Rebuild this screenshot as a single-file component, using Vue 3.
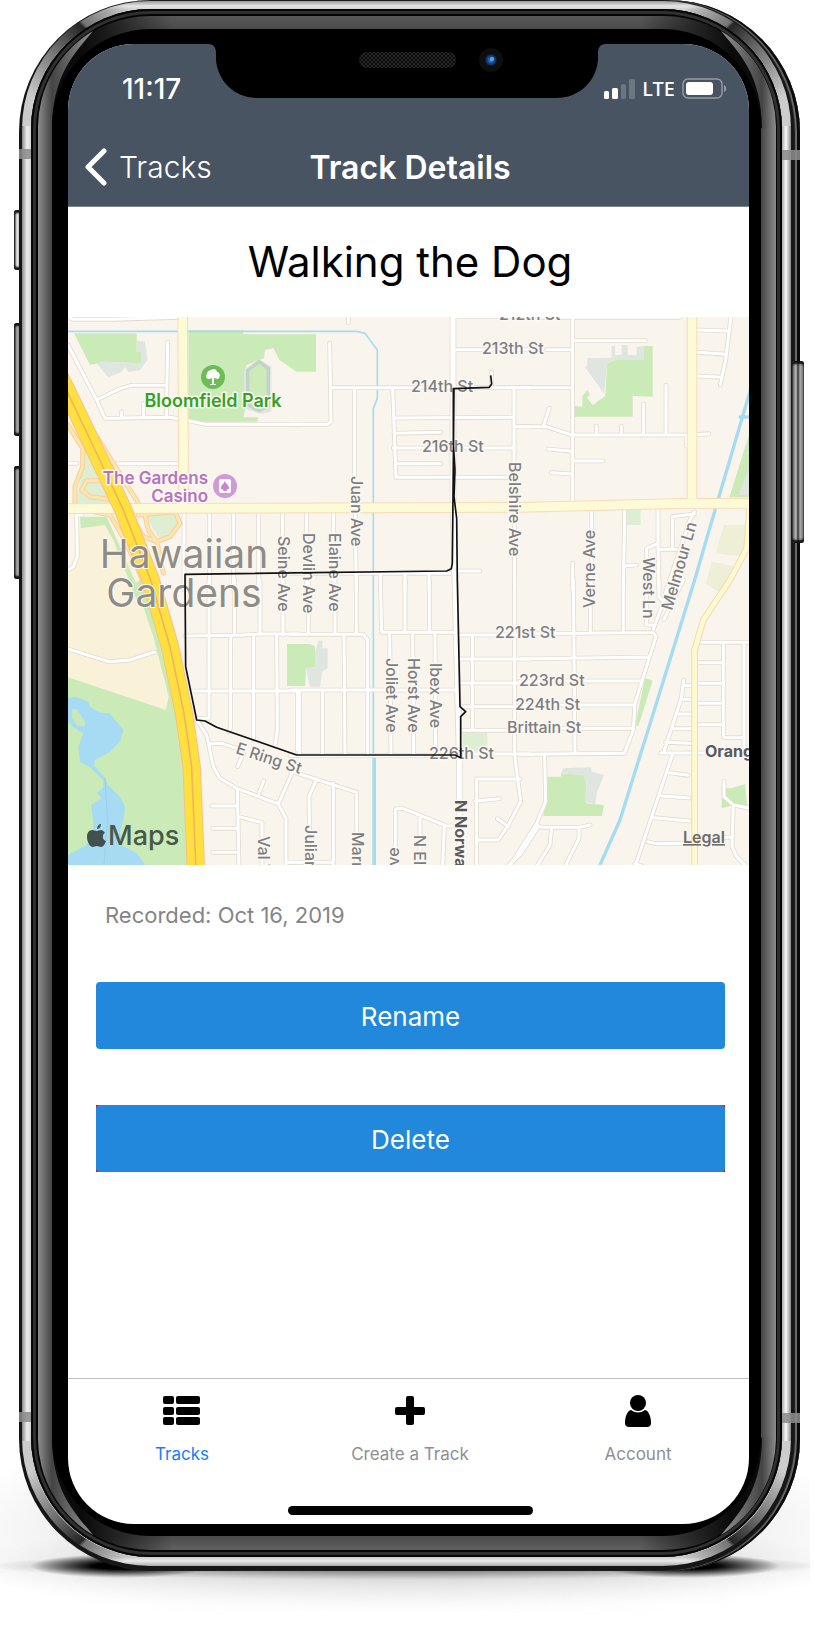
<script setup>
const corners = ['tl', 'tr', 'bl', 'br']

const tabs = [
  { id: 'tracks', label: 'Tracks', active: true },
  { id: 'create', label: 'Create a Track', active: false },
  { id: 'account', label: 'Account', active: false },
]

// The map is divided into six tiles; every path is local to its tile.
const tiles = [
  {
    at: 'translate(-24 -21)',
    roads: 'M24 22L40 28H160L355 22M24 105L110 270L135 325L330 322L385 332L435 343H720M110 270L180 236L215 226H318M323 96L319 320M185 305V325M251 280V322M24 460H50M172 461H360M372 610V840M449 610V840M521 610V840M596 610V840M667 610V840M66 615H50L52 740L40 770L24 780',
    green: 'M385 60H550V73H768V185H710L690 172L658 150L640 115L615 120L612 145L597 150L560 165L552 195L555 300L550 322H595L592 335H385ZM42 70H230V125H245V160L130 155L90 165ZM60 620H140L175 700L250 870H230L160 690L135 645L62 655Z',
    pale: 'M75 420L115 480L140 540L180 580H50L68 470ZM255 615L350 605L355 650L300 690Z',
    grey: 'M230 92L255 95L262 150L240 180L205 186L195 170L185 186L145 202L110 160L130 155L245 160V125H230ZM597 148L634 170V305L600 312L552 295V180Z',
    olive: '',
  },
  {
    at: 'translate(666 -21)',
    roads: 'M175 20V38M0 343H112L123 335L119 100M127 233H720M194 233V500L199 840M308 235L318 502H660M312 324L670 322M312 370L452 367M310 414H670M316 461H452M500 20H720M500 119H720M672 233V460L674 840M672 350H720M50 610V840M131 610V840M500 783H570M271 790V840M345 790V840M417 790V840M0 790H480M604 185V232',
    green: '', pale: '', grey: '', olive: '',
  },
  {
    at: 'translate(1356 -21)',
    roads: 'M0 22H480M158 22V575M158 92H376M80 119H158M0 233H158M0 350H80L155 375H500M70 348L88 295M84 417L158 424M94 488L158 492M158 453H249M229 348V375M304 348V375M371 282V375M438 225V375M499 375V408M532 374L567 371M530 60L625 63M532 127L620 133M532 198L606 202M633 20L617 150L601 225M158 760V840M215 600V840M314 600L310 840M414 597V700L417 840M414 700L380 715V840M523 612L457 620V718H470M417 718H457M523 605L510 630L436 850M312 768L350 765',
    green: 'M165 288L187 290V258L203 240L210 255L200 262L218 285L256 258L262 160L285 150H370V108H398V260L338 258V320H165ZM690 365L628 562H690Z',
    pale: 'M320 600H362V645H320Z',
    grey: 'M194 170L202 168V145L275 143V108H285V135H305V105H323V135H350V110L370 108V150H285L262 160L252 250ZM690 470L655 555H690Z',
    olive: 'M612 645H676V740L587 730ZM575 755L640 768L600 850L558 820Z',
  },
  {
    at: 'translate(-24 789)',
    roads: 'M24 207L145 245L205 241L285 216M375 168L540 166L600 162H720M395 333H720M447 0V415M524 0V165M512 170V440L508 455M600 0V160M581 168V480M669 0V165M650 168L652 450L645 500M712 333V510M410 420L440 465L460 560L480 595L530 625L655 672L678 715V860M410 415H440M450 492L485 490L530 505M533 560L550 520M597 640L611 603M655 672L700 570M532 625L537 860M455 678H530M458 745H530M458 817H535M537 710L606 728V860M678 847H720',
    green: 'M24 292L318 390L326 350L280 170L230 20H215L240 0L340 200L372 480L388 860H24Z',
    pale: '', grey: '', olive: '',
  },
  {
    at: 'translate(666 789)',
    roads: 'M55 0V160M135 0V160M199 0V155M0 163H220L233 180V520M162 168L165 520M0 330H500M28 333V520M98 333V520M271 0L275 157H490M345 0V157M418 0V157M299 160L303 520M368 160L371 520M435 160L437 520M0 527H500M512 165H720M512 237H720M515 309H720M520 380H720M547 165V450M520 451H720M510 522H720M674 0V525L692 665L655 735L625 780H560M560 860V597H690M555 663L628 656M622 716L655 740M745 740L690 825L650 860M0 573L200 637V860M80 597L57 650L60 860M130 610V860M0 847H130M316 860V687L338 685L470 738H500M390 712V860M463 740L458 860',
    green: 'M-9 192H60L75 200V262L48 265L45 318H-9Z',
    pale: 'M518 457H592V512H520Z',
    grey: 'M85 182H97V205H113V265L97 275L90 320H60L48 265L75 262V220Z',
    olive: '',
  },
  {
    at: 'translate(1356 789)',
    roads: 'M160 0L165 520M211 0V158M310 0V158M0 162L310 158H400L408 170L345 370L340 450L313 520L0 523M0 237L385 231M0 303H365M0 375H345M0 445H335M417 0V50L425 60M380 0V135H400M455 0L400 148M490 0L432 118M74 525L77 665L50 730L-32 860M50 735L65 742H180L210 735M95 742L90 795L50 860M177 742V775L135 860M545 187H690M610 187V470L620 473H672M672 187V505M535 248H610M535 310H610M535 370H610M535 434H610M520 317H490M487 358H520M472 402H520M455 446H520M437 487L515 490M491 300L484 355L432 515M422 519H560M457 525L345 860M447 578L505 586M425 648L508 654M402 713L508 723M383 785L405 791L520 789M345 850L370 860M612 603V650L640 675L690 685M640 675L636 800L650 830L680 860M615 772H636',
    green: 'M375 295L398 302L355 438H345ZM82 590H122L124 580L190 585L200 610L197 640L200 670L252 675L246 708H70L80 640ZM605 625H635L675 612L682 680L640 675L605 685Z',
    pale: '',
    grey: 'M130 565L213 562L215 575L252 585L230 640L226 672L195 665L200 610L190 585L124 580Z',
    olive: 'M560 0H620L600 30L560 15Z',
  },
]

const river = 'M0 43H866L891 49L928 99V244L916 274V1644'
const riverWide = 'M919 1319V1644M2050 210L1944 569L1880 789L1756 1189L1656 1509L1596 1644M2016 300H2046'
const ramps = 'M0 324L44 394V449L21 509V569M146 549L66 539L41 519L56 491H101M61 319L211 559M211 594L321 584L336 619L306 659L266 674L226 659L191 599M231 594L241 639L266 674L286 769M76 584L126 594L176 679L236 819'
const avenues = 'M344 0L347 560M-10 575L1356 571L1856 559H2060M1872 0V559'
const parkway = 'M2046 560L2036 695L1986 789L1906 909L1880 999V1660'
const freeway = 'M-30 170L0 229L81 399L164 574L248 789L306 989L348 1189L371 1349L384 1660'
const norwalk = 'M1155 0V539L1161 789L1174 1329V1650'
const walk = 'M1268 175L1271 201L1264 211L1156 215V379L1161 459L1158 539L1166 604L1168 789L1176 1169L1193 1184L1178 1199V1322L1161 1314H686L446 1231L411 1212L386 1209L353 1049L351 772L1136 762L1150 755L1153 739L1155 540L1158 215'

const labels = [
  { t: '212th St', x: 431, y: 3, r: 0 },
  { t: '213th St', x: 414, y: 37, r: 0 },
  { t: '214th St', x: 343, y: 75, r: 0 },
  { t: '216th St', x: 354, y: 135, r: 0 },
  { t: '221st St', x: 427, y: 321, r: 0 },
  { t: '223rd St', x: 451, y: 369, r: 0 },
  { t: '224th St', x: 447, y: 393, r: 0 },
  { t: 'Brittain St', x: 439, y: 416, r: 0 },
  { t: '226th St', x: 361, y: 442, r: 0 },
  { t: 'Seine Ave', x: 210, y: 219, r: 90 },
  { t: 'Devlin Ave', x: 235, y: 216, r: 90 },
  { t: 'Elaine Ave', x: 261, y: 216, r: 90 },
  { t: 'Juan Ave', x: 283, y: 159, r: 90 },
  { t: 'Belshire Ave', x: 441, y: 145, r: 90 },
  { t: 'Joliet Ave', x: 318, y: 341, r: 90 },
  { t: 'Horst Ave', x: 340, y: 341, r: 90 },
  { t: 'Ibex Ave', x: 362, y: 346, r: 90 },
  { t: 'West Ln', x: 575, y: 240, r: 90 },
  { t: 'Verne Ave', x: 527, y: 291, r: -90 },
  { t: 'Melmour Ln', x: 604, y: 294, r: -74 },
  { t: 'E Ring St', x: 167, y: 436, r: 18 },
  { t: 'Val V', x: 190, y: 519, r: 90 },
  { t: 'Julian', x: 237, y: 508, r: 90 },
  { t: 'Marr', x: 284, y: 515, r: 90 },
  { t: 'N El', x: 346, y: 518, r: 90 },
  { t: 'Ave', x: 331, y: 559, r: -90 },
]
</script>

<template>
  <div class="page">
    <div class="ground"></div>
    <div class="phone">
      <span class="key mute"></span>
      <span class="key vol-up"></span>
      <span class="key vol-down"></span>
      <span class="key power"></span>
      <div class="edge">
        <div class="steel">
          <svg v-for="c in corners" :key="c" :class="['corner', c]" viewBox="0 0 128 128" aria-hidden="true">
            <defs>
              <linearGradient :id="'st' + c" x1="0" y1="1" x2="1" y2="0">
                <stop offset="0.15" stop-color="#1c1c1c" stop-opacity="0" />
                <stop offset="0.45" stop-color="#1c1c1c" stop-opacity="0.55" />
                <stop offset="0.64" stop-color="#1c1c1c" stop-opacity="0.95" />
                <stop offset="0.66" stop-color="#1c1c1c" stop-opacity="0.5" />
                <stop offset="0.9" stop-color="#1c1c1c" stop-opacity="0" />
              </linearGradient>
            </defs>
            <path d="M4 128A124 124 0 0 1 128 4" fill="none" :stroke="`url(#st${c})`" stroke-width="9" />
          </svg>
          <div class="groove">
            <div class="bezel">
              <svg v-for="c in corners" :key="c" :class="['corner', c]" viewBox="0 0 128 128" aria-hidden="true">
                <defs>
                  <linearGradient :id="'bz' + c" gradientUnits="userSpaceOnUse" x1="0" y1="0" x2="50" y2="0">
                    <stop offset="0" stop-color="#8c8c8c" />
                    <stop offset="0.28" stop-color="#444" />
                    <stop offset="1" stop-color="#8a8a8a" />
                  </linearGradient>
                </defs>
                <path d="M0 113V112A112 112 0 0 1 55 15C38 36 14 58 14 113Z" :fill="`url(#bz${c})`" />
              </svg>
              <div class="glass">
                <main class="screen">
                  <svg class="notch" viewBox="0 0 398 54" aria-hidden="true">
                    <defs>
                      <pattern id="mesh" width="4" height="4" patternUnits="userSpaceOnUse">
                        <rect width="4" height="4" fill="#262626" />
                        <path d="M0 0L4 4M4 0L0 4" stroke="#0c0c0c" />
                      </pattern>
                      <radialGradient id="lens">
                        <stop offset="0" stop-color="#3c8be0" />
                        <stop offset="0.5" stop-color="#1d4f90" />
                        <stop offset="1" stop-color="#0c1a30" />
                      </radialGradient>
                    </defs>
                    <path d="M0 -1V0C6 0 8 4 8 9V16C10 38 27 54 50 54H348C371 54 388 38 390 16V9C390 4 392 0 398 0V-1Z" />
                    <rect x="151" y="8" width="97" height="16" rx="8" fill="url(#mesh)" />
                    <circle cx="283" cy="16" r="12" fill="#0e0e0f" />
                    <circle cx="283" cy="16" r="6" fill="url(#lens)" />
                    <circle cx="284" cy="15" r="2" fill="#5aa5f0" />
                  </svg>

                  <header class="top">
                    <div class="status">
                      <time class="clock">11:17</time>
                      <div class="signals">
                        <svg class="bars" viewBox="0 0 31 20" role="img" aria-label="Signal">
                          <rect x="0" y="12" width="5" height="8" rx="1.5" fill="#fff" />
                          <rect x="8" y="9" width="6" height="11" rx="1.5" fill="#fff" />
                          <rect x="17" y="5" width="5" height="15" rx="1.5" fill="#697781" />
                          <rect x="25" y="0" width="6" height="20" rx="1.5" fill="#697781" />
                        </svg>
                        <span class="lte">LTE</span>
                        <svg class="battery" viewBox="0 0 45 21" role="img" aria-label="Battery">
                          <rect x="1" y="1" width="39" height="19" rx="5" fill="none" stroke="#929aa2" stroke-width="1.5" />
                          <rect x="4" y="4" width="27" height="13" rx="3" fill="#fff" />
                          <path d="M42 7C45 8 45 13 42 14Z" fill="#929aa2" />
                        </svg>
                      </div>
                    </div>
                    <nav class="nav">
                      <a class="back" href="#tracks">
                        <svg class="chevron" viewBox="0 0 22 38" aria-hidden="true">
                          <path d="M19 3L3 19L19 35" fill="none" stroke="#fff" stroke-width="5" stroke-linecap="round" stroke-linejoin="round" />
                        </svg>
                        Tracks
                      </a>
                      <h1>Track Details</h1>
                    </nav>
                  </header>

                  <h2>Walking the Dog</h2>

                  <svg class="map" viewBox="0 0 681 548" role="img" aria-label="Route map">
                    <rect width="681" height="548" fill="#f9f4ec" />
                    <g transform="scale(0.33333)" fill="none" stroke-linejoin="round" stroke-linecap="round">
                      <path fill="#faf1d9" d="M0 775L30 720L36 630L125 622L180 720L230 850L302 1140L300 1170L290 1180L0 1081Z" />
                      <g v-for="t in tiles" :key="t.at" :transform="t.at">
                        <path :d="t.green" fill="#caeab7" />
                        <path :d="t.pale" fill="#deeed3" />
                        <path :d="t.olive" fill="#edefd7" />
                        <path :d="t.grey" fill="#dfe5df" />
                      </g>
                      <path fill="#cdeab9" stroke="#c3d2cb" stroke-width="10" d="M573 134L601 154V268L573 281L539 262V160Z" />
                      <g transform="translate(-24 789)">
                        <path fill="#a6dbf3" d="M24 355L45 350L85 365L90 380L120 398L150 400L165 420L190 450L180 485L150 515L105 540L102 555L135 595L143 615L180 650L195 680L190 720L180 750L185 795L230 820L260 860H24V825L70 800L100 780V720L93 675L125 655L112 640L130 620V600L90 562L60 545L55 500L70 460L45 445L24 425Z" />
                        <path fill="#cbe8b8" d="M38 385L50 388L77 430L72 440L50 435L34 408Z" />
                        <path stroke="#8fcbe6" stroke-width="2" d="M135 595L142 720L132 855" />
                      </g>
                      <g stroke="#a6dcf2">
                        <path :d="river" stroke-width="5" />
                        <path :d="riverWide" stroke-width="10" />
                      </g>
                      <g stroke="#e3dbd0" stroke-width="14">
                        <path v-for="t in tiles" :key="t.at" :d="t.roads" :transform="t.at" />
                      </g>
                      <path :d="norwalk" stroke="#e3dbd0" stroke-width="20" />
                      <g stroke="#fff" stroke-width="9">
                        <path v-for="t in tiles" :key="t.at" :d="t.roads" :transform="t.at" />
                      </g>
                      <path :d="norwalk" stroke="#fff" stroke-width="15" />
                      <path :d="ramps" stroke="#f8cf9d" stroke-width="15" />
                      <path :d="ramps" stroke="#fbe6b0" stroke-width="9" />
                      <path :d="parkway" stroke="#f8d9ae" stroke-width="20" />
                      <path :d="avenues" stroke="#f8dcb7" stroke-width="32" />
                      <path :d="parkway" stroke="#fdfad2" stroke-width="14" />
                      <path :d="avenues" stroke="#fdfad8" stroke-width="26" />
                      <path :d="freeway" stroke="#f9bf86" stroke-width="55" />
                      <path :d="freeway" stroke="#ffe03e" stroke-width="49" />
                      <path :d="freeway" stroke="#f2b45c" stroke-width="5" />
                    </g>

                    <g class="street">
                      <text v-for="l in labels" :key="l.t + l.x" :transform="`translate(${l.x} ${l.y}) rotate(${l.r})`">{{ l.t }}</text>
                      <text class="bold" transform="translate(387 483) rotate(90)">N Norwalk</text>
                      <text class="bold" x="637" y="440">Orange</text>
                    </g>
                    <g class="city">
                      <text x="116" y="251">Hawaiian</text>
                      <text x="116" y="290">Gardens</text>
                    </g>
                    <text class="park" x="145" y="90">Bloomfield Park</text>
                    <g class="casino">
                      <text x="140" y="167">The Gardens</text>
                      <text x="140" y="185">Casino</text>
                    </g>
                    <g transform="translate(145 60)">
                      <circle r="12" fill="#6cbd55" />
                      <path fill="#fff" d="M-1 7V1L-4 2C-7 2-8-1-6-3C-6-6-3-7-2-7C0-9 4-8 4-5C7-5 8 0 5 2L1 1V7H3V8H-3V7Z" />
                    </g>
                    <g transform="translate(157 169)">
                      <circle r="12" fill="#d09ad6" />
                      <rect x="-6" y="-7" width="12" height="14" rx="2" fill="#fff" />
                      <path fill="#c586cc" d="M0-5C1-2 4-1 4 2C4 4 1 4 1 2L2 5H-2L-1 2C-1 4-4 4-4 2C-4-1-1-2 0-5Z" />
                    </g>
                    <path :d="walk" transform="scale(0.33333)" fill="none" stroke="#111" stroke-width="5" stroke-linejoin="round" />
                    <path fill="#42514d" d="M33 513C31 513 30 514 29 514C27 514 26 513 24 513C21 513 19 516 19 520C19 525 22 530 25 530C26 530 27 529 29 529C31 529 31 530 33 530C35 530 37 527 38 524C34 523 34 517 37 516C36 514 34 513 33 513ZM29 512C29 509 31 507 33 507C33 509 32 512 29 512Z" />
                    <text class="maps" x="40" y="528">Maps</text>
                    <a href="#legal"><text class="legal" x="615" y="526">Legal</text></a>
                  </svg>

                  <p class="recorded">Recorded: Oct 16, 2019</p>
                  <div class="actions">
                    <div class="slot"><button type="button">Rename</button></div>
                    <div class="slot danger"><button type="button">Delete</button></div>
                  </div>

                  <nav class="tabs">
                    <a v-for="tab in tabs" :key="tab.id" :href="'#' + tab.id" :class="{ active: tab.active }">
                      <svg v-if="tab.id === 'tracks'" viewBox="0 0 38 32" aria-hidden="true">
                        <rect x="0" y="1" width="11" height="8" rx="2" /><rect x="13" y="1" width="24" height="8" rx="2" />
                        <rect x="0" y="12" width="11" height="8" rx="2" /><rect x="13" y="12" width="24" height="8" rx="2" />
                        <rect x="0" y="22" width="11" height="8" rx="2" /><rect x="13" y="22" width="24" height="8" rx="2" />
                      </svg>
                      <svg v-else-if="tab.id === 'create'" viewBox="0 0 38 32" aria-hidden="true">
                        <path d="M17 1H21Q23 1 23 3V12H32Q34 12 34 14V18Q34 20 32 20H23V28Q23 30 21 30H17Q15 30 15 28V20H6Q4 20 4 18V14Q4 12 6 12H15V3Q15 1 17 1Z" />
                      </svg>
                      <svg v-else viewBox="0 0 38 32" aria-hidden="true">
                        <circle cx="19" cy="8" r="8" />
                        <path d="M12 15Q19 20 26 15C30 16 32 22 32 28Q32 32 28 32H10Q6 32 6 28C6 22 8 16 12 15Z" />
                      </svg>
                      <span>{{ tab.label }}</span>
                    </a>
                  </nav>
                  <div class="home"></div>
                </main>
              </div>
            </div>
          </div>
        </div>
      </div>
      <span class="band left-top"></span>
      <span class="band left-bottom"></span>
      <span class="band right-top"></span>
      <span class="band right-bottom"></span>
    </div>
  </div>
</template>

<style>
body {
  margin: 0;
  background: #fff;
}
</style>

<style scoped>
.page {
  position: relative;
  display: flex;
  flex-direction: column;
  box-sizing: border-box;
  min-height: 100vh;
  padding: 0 15px 57px 19px;
  overflow: hidden;
  font-family: Inter, "Liberation Sans", sans-serif;
}
.ground {
  position: absolute;
  left: 0;
  right: 5px;
  bottom: 10px;
  height: 190px;
  background:
    radial-gradient(ellipse 90px 12px at 120px 138px, #000 30%, transparent),
    radial-gradient(ellipse 90px 12px at calc(100% - 120px) 138px, #000 30%, transparent),
    radial-gradient(ellipse 52% 14px at 50% 138px, #777 30%, transparent),
    radial-gradient(ellipse 55% 46px at 50% 138px, #ccc, transparent),
    radial-gradient(ellipse 58% 110px at 50% 100px, #ccc, transparent);
  -webkit-mask-image: linear-gradient(#000 140px, transparent 188px);
  mask-image: linear-gradient(#000 140px, transparent 188px);
}
.phone, .edge, .steel, .groove, .bezel, .glass {
  position: relative;
  display: flex;
  flex-direction: column;
  flex: 1;
  box-sizing: border-box;
}
.edge {
  padding: 1px 9px 5px 3px;
  border-radius: 132px;
  background: #161616;
  box-shadow: inset -3px 0 0 #0a0a0a, inset -5px 0 1px #6b6b6b;
}
.steel {
  padding: 8px 9px 9px;
  border-radius: 128px;
  background:
    linear-gradient(to right, #8a8a8a, #eee 5px, #d2d2d2 9px, transparent 9px, transparent calc(100% - 9px), #aaa calc(100% - 9px), #fafafa calc(100% - 5px), #888) center / 100% calc(100% - 250px) no-repeat,
    linear-gradient(#999, #e6e6e6 5px, #ccc 9px, #ccc calc(100% - 9px), #eaeaea calc(100% - 5px), #aaa);
}
.groove {
  padding: 7px 6px 7px 7px;
  border-radius: 120px;
  background: #050505;
  box-shadow: inset 0 0 0 2px #060606, inset 0 0 0 5px #303030;
}
.bezel {
  padding: 13px 15px 14px 14px;
  border-radius: 112px;
  background:
    linear-gradient(to right, #8c8c8c, #444) left center / 14px calc(100% - 224px) no-repeat,
    linear-gradient(to left, #8c8c8c, #444) right center / 15px calc(100% - 224px) no-repeat,
    linear-gradient(to right, #0b0b0b, transparent 90px, transparent calc(100% - 90px), #0b0b0b) center / calc(100% - 90px) 100% no-repeat,
    linear-gradient(#585858, #4a4a4a 13px, #4a4a4a calc(100% - 14px), #606060) center / calc(100% - 90px) 100% no-repeat,
    #0b0b0b;
}
.glass {
  padding: 15px 12px 12px 16px;
  border-radius: 98px;
  background: #000;
}
.corner {
  position: absolute;
  width: 128px;
  height: 128px;
}
.tl { left: 0; top: 0; }
.tr { right: 0; top: 0; transform: scaleX(-1); }
.bl { left: 0; bottom: 0; transform: scaleY(-1); }
.br { right: 0; bottom: 0; transform: scale(-1); }
.key {
  position: absolute;
  left: -5px;
  width: 8px;
  border-radius: 3px;
  background: linear-gradient(to right, #222, #aaa 3px, #666);
  box-shadow: inset 0 3px 2px #111, inset 0 -3px 2px #111;
}
.mute { top: 210px; height: 60px; background: linear-gradient(to right, #222, #eee 3px, #777); }
.vol-up { top: 323px; height: 113px; }
.vol-down { top: 466px; height: 113px; }
.power {
  left: auto;
  right: -4px;
  top: 361px;
  width: 12px;
  height: 182px;
  z-index: 1;
  background: linear-gradient(to right, #555, #bbb 4px, #333 6px, #aaa 8px, #777);
}
.band {
  position: absolute;
  width: 12px;
  height: 10px;
  background: #8c8c8cdd;
}
.left-top { left: 0; top: 149px; }
.left-bottom { left: 0; bottom: 149px; }
.right-top { right: 0; top: 150px; width: 18px; }
.right-bottom { right: 0; bottom: 148px; width: 18px; }

.screen {
  position: relative;
  display: flex;
  flex-direction: column;
  flex: 1;
  border-radius: 66px;
  overflow: hidden;
  background: #fff;
  color: #000;
}
.notch {
  position: absolute;
  left: 50%;
  top: 0;
  width: 398px;
  height: 54px;
  margin-left: -201px;
}
.top {
  background: #495462;
  border-bottom: 1px solid #7d858f;
  color: #fff;
}
.status {
  display: flex;
  align-items: center;
  justify-content: space-between;
  height: 89px;
  padding: 0 22px 0 54px;
}
.clock {
  font-size: 28px;
  font-weight: 500;
}
.signals {
  display: flex;
  align-items: center;
  gap: 7px;
}
.bars { width: 31px; height: 20px; }
.battery { width: 45px; height: 21px; }
.lte {
  font-family: "Noto Sans", sans-serif;
  font-size: 20px;
  font-weight: 500;
  line-height: 20px;
}
.nav {
  display: grid;
  grid-template-columns: 1fr auto 1fr;
  align-items: center;
  height: 68px;
  padding: 0 14px 5px 17px;
}
.back {
  display: flex;
  align-items: center;
  gap: 12px;
  color: #fff;
  font-size: 30px;
  font-weight: 300;
  text-decoration: none;
}
.chevron { width: 22px; height: 38px; }
h1 {
  margin: 0;
  font-size: 32px;
  font-weight: 600;
}
h2 {
  margin: 0;
  padding: 0 0 0 3px;
  font-size: 42px;
  font-weight: 400;
  line-height: 110px;
  text-align: center;
}
.map {
  display: block;
  width: 100%;
}
.street {
  fill: #7d7e80;
  font-size: 16px;
  font-weight: 500;
}
.map text {
  paint-order: stroke;
  stroke: #fbf8f3;
  stroke-width: 3px;
  stroke-linejoin: round;
}
.map .bold { font-weight: 700; fill: #58595b; }
.map .city {
  fill: #8f8c87;
  font-size: 39px;
  text-anchor: middle;
}
.map .city text { stroke-width: 2px; }
.map .park {
  fill: #35a11f;
  font-size: 18px;
  font-weight: 600;
  text-anchor: middle;
}
.casino {
  fill: #b574bd;
  font-size: 17px;
  font-weight: 600;
  text-anchor: end;
}
.map .maps {
  fill: #48584a;
  stroke: none;
  font-size: 27px;
  font-weight: 500;
}
.map .legal {
  fill: #6c6c6c;
  stroke: none;
  font-size: 16px;
  font-weight: 600;
  text-decoration: underline;
}
.recorded {
  margin: 36px 37px 0;
  color: #858585;
  font-size: 22px;
  line-height: 28px;
}
.actions {
  display: grid;
  gap: 56px;
  margin: 53px 24px 40px 28px;
}
.slot { display: grid; }
.danger { background: #f00; }
button {
  height: 67px;
  padding: 2px 0 0;
  border: 0;
  border-radius: 4px;
  background: #2188dc;
  color: #fff;
  font-family: inherit;
  font-size: 26px;
}
.tabs {
  display: grid;
  grid-template-columns: repeat(3, 1fr);
  margin: auto -3px 0 0;
  padding-top: 16px;
  border-top: 1px solid #bfbfbf;
}
.tabs a {
  display: flex;
  flex-direction: column;
  align-items: center;
  gap: 17px;
  color: #8f8f94;
  font-size: 17px;
  line-height: 20px;
  text-decoration: none;
}
.tabs svg { width: 38px; height: 32px; fill: #000; }
.tabs .active { color: #147efb; }
.home {
  width: 36%;
  height: 9px;
  margin: 42px auto 9px;
  border-radius: 5px;
  background: #000;
  transform: translateX(2px);
}
</style>
